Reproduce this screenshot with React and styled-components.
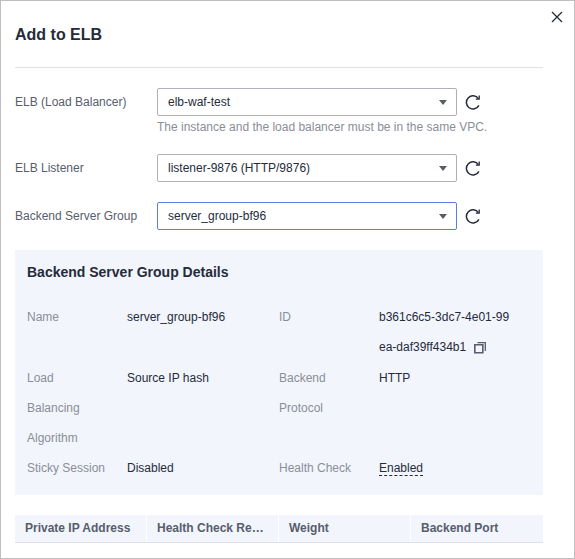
import React from "react";
import styled, { createGlobalStyle } from "styled-components";

const GlobalStyle = createGlobalStyle`
  *, *::before, *::after { box-sizing: border-box; }
  body {
    margin: 0;
    background: #ffffff;
    color: #252b3a;
    font: 12px/20px "Liberation Sans", Arial, sans-serif;
  }
`;

const Dialog = styled.section`
  position: relative;
  min-height: 100vh;
  padding: 0 31px 14px 14px;
  border: 1px solid #bfbfbf;
`;

const Header = styled.header`
  display: flex;
  align-items: center;
  height: 67px;
  padding-top: 2px;
  border-bottom: 1px solid #dfe1e6;
`;

const Title = styled.h1`
  margin: 0;
  font-size: 16px;
  line-height: 24px;
  font-weight: 700;
`;

const IconButton = styled.button`
  display: inline-flex;
  align-items: center;
  justify-content: center;
  flex: none;
  width: 20px;
  height: 20px;
  padding: 0;
  border: 0;
  background: none;
  color: #252b3a;
  cursor: pointer;

  svg { display: block; }
`;

const CloseButton = styled(IconButton)`
  position: absolute;
  top: 6px;
  right: 7px;
`;

const Form = styled.form`
  padding: 20px 0;
`;

const Field = styled.div`
  display: grid;
  grid-template-columns: 142px minmax(0, 1fr);
  margin-bottom: ${(p) => (p.$last ? "0" : p.$hint ? "16px" : "20px")};
`;

const FieldLabel = styled.label`
  color: #575d6c;
  line-height: 28px;
`;

const Control = styled.div`
  display: flex;
  align-items: center;
  gap: 6px;
`;

const SelectBox = styled.div`
  display: grid;
  flex: 0 1 300px;
  align-items: center;

  > * { grid-area: 1 / 1; }
  > svg {
    justify-self: end;
    margin-right: 10px;
    pointer-events: none;
  }
`;

const Select = styled.select`
  appearance: none;
  width: 100%;
  height: 28px;
  padding: 0 28px 0 10px;
  border: 1px solid ${(p) => (p.$active ? "#5e7ce0" : "#adb0b8")};
  border-radius: 2px;
  outline: none;
  background: #ffffff;
  color: #252b3a;
  font: inherit;
`;

const Hint = styled.p`
  margin: 0;
  color: #8a8e99;
  line-height: 22px;
`;

const Panel = styled.section`
  padding: 12px;
  background: #f2f5fc;
`;

const PanelTitle = styled.h2`
  margin: 0 0 20px;
  font-size: 14px;
  line-height: 20px;
  font-weight: 700;
`;

const Details = styled.dl`
  display: grid;
  grid-template-columns: repeat(2, minmax(0, 1fr));
  margin: 0;
  line-height: 30px;
`;

const Detail = styled.div`
  display: grid;
  grid-template-columns: 80px minmax(0, 1fr);
  column-gap: 20px;
  padding-right: 20px;
`;

const Term = styled.dt`
  color: #8a8e99;
`;

const Value = styled.dd`
  margin: 0;
  word-break: break-all;
`;

const CopyButton = styled(IconButton)`
  height: 30px;
  margin-left: 4px;
  vertical-align: middle;
  color: #575d6c;
`;

const Tip = styled.span`
  border-bottom: 1px dashed #252b3a;
`;

const Table = styled.table`
  width: 100%;
  margin-top: 20px;
  border-collapse: separate;
  border-spacing: 0;
  table-layout: fixed;
`;

const HeadCell = styled.th`
  height: 28px;
  padding: 0 10px;
  overflow: hidden;
  border-bottom: 1px solid #dfe1e6;
  background: #f2f5fc;
  box-shadow: inset -1px 0 #ffffff;
  color: #575d6c;
  font-weight: 700;
  line-height: 20px;
  text-align: left;
  text-overflow: ellipsis;
  white-space: nowrap;

  &:last-child { box-shadow: none; }
`;

const CloseIcon = () => (
  <svg width="12" height="12" viewBox="0 0 12 12" fill="none" stroke="currentColor" strokeWidth="1.3" aria-hidden="true">
    <path d="M1 1l10 10M11 1L1 11" />
  </svg>
);

const RefreshIcon = () => (
  <svg width="16" height="16" viewBox="0 0 16 16" fill="none" stroke="currentColor" strokeWidth="1.5" aria-hidden="true">
    <path d="M13.9 11.4A6.6 6.6 0 1 1 13.4 4.6" />
    <path d="M14.2 1.6v3.5h-3.4" strokeWidth="1.3" />
  </svg>
);

const CaretIcon = () => (
  <svg width="8" height="5" viewBox="0 0 8 5" fill="#575d6c" aria-hidden="true">
    <path d="M0 0h8L4 5z" />
  </svg>
);

const CopyIcon = () => (
  <svg width="12" height="12" viewBox="0 0 12 12" fill="none" stroke="currentColor" aria-hidden="true">
    <path d="M0.8 2.8h8v8h-8z" strokeWidth="1.6" />
    <path d="M3.5 0.6h7.8v8.4" strokeWidth="1.3" />
  </svg>
);

const fields = [
  { id: "elb", label: "ELB (Load Balancer)", value: "elb-waf-test", hint: "The instance and the load balancer must be in the same VPC." },
  { id: "listener", label: "ELB Listener", value: "listener-9876 (HTTP/9876)" },
  { id: "group", label: "Backend Server Group", value: "server_group-bf96", active: true },
];

const details = [
  { term: "Name", value: "server_group-bf96" },
  { term: "ID", value: "b361c6c5-3dc7-4e01-99ea-daf39ff434b1", copy: true },
  { term: "Load Balancing Algorithm", value: "Source IP hash" },
  { term: "Backend Protocol", value: "HTTP" },
  { term: "Sticky Session", value: "Disabled" },
  { term: "Health Check", value: "Enabled", tip: true },
];

const columns = ["Private IP Address", "Health Check Result", "Weight", "Backend Port"];

export default function App() {
  return (
    <>
      <GlobalStyle />
      <Dialog role="dialog" aria-labelledby="dialog-title">
        <Header>
          <Title id="dialog-title">Add to ELB</Title>
          <CloseButton type="button" aria-label="Close"><CloseIcon /></CloseButton>
        </Header>
        <Form>
          {fields.map((f, i) => (
            <Field key={f.id} $hint={!!f.hint} $last={i === fields.length - 1}>
              <FieldLabel htmlFor={f.id}>{f.label}</FieldLabel>
              <div>
                <Control>
                  <SelectBox>
                    <Select id={f.id} $active={f.active} defaultValue={f.value}>
                      <option>{f.value}</option>
                    </Select>
                    <CaretIcon />
                  </SelectBox>
                  <IconButton type="button" aria-label={`Refresh ${f.label}`}><RefreshIcon /></IconButton>
                </Control>
                {f.hint && <Hint>{f.hint}</Hint>}
              </div>
            </Field>
          ))}
        </Form>
        <Panel>
          <PanelTitle>Backend Server Group Details</PanelTitle>
          <Details>
            {details.map((d) => (
              <Detail key={d.term}>
                <Term>{d.term}</Term>
                <Value>
                  {d.tip ? <Tip>{d.value}</Tip> : d.value}
                  {d.copy && <CopyButton type="button" aria-label="Copy ID"><CopyIcon /></CopyButton>}
                </Value>
              </Detail>
            ))}
          </Details>
        </Panel>
        <Table>
          <thead>
            <tr>
              {columns.map((c) => <HeadCell key={c} scope="col">{c}</HeadCell>)}
            </tr>
          </thead>
        </Table>
      </Dialog>
    </>
  );
}
